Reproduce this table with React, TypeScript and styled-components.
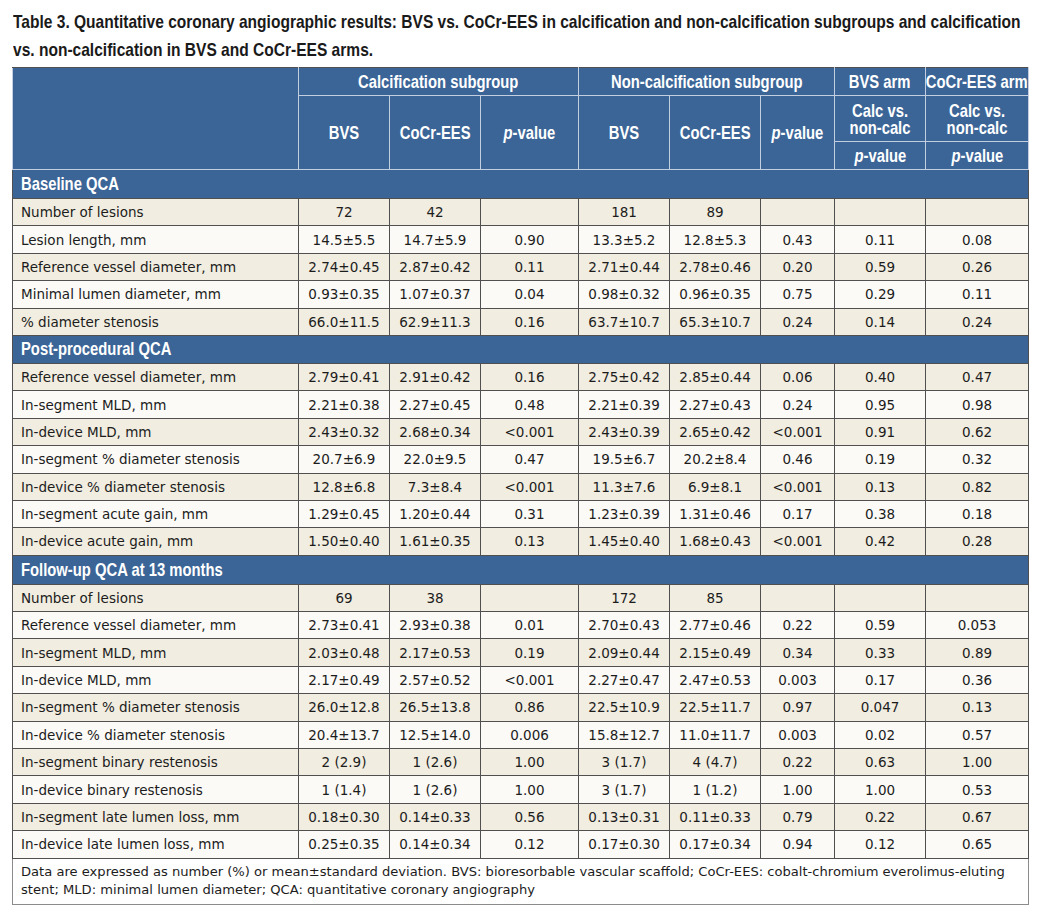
import React from 'react';
import styled, { createGlobalStyle } from 'styled-components';

const GlobalStyle = createGlobalStyle`
  html, body {
    margin: 0;
    padding: 0;
    background: #ffffff;
  }
`;

const heading = `"Liberation Sans", Arial, sans-serif`;
const body = `"DejaVu Sans", Verdana, sans-serif`;

const Page = styled.div`
  width: 1016px;
  padding: 8px 0 0 12px;
`;

const Title = styled.h1`
  margin: 0 0 3px 1px;
  font-family: ${heading};
  font-weight: 700;
  font-size: 18.5px;
  line-height: 28px;
  color: #1a1a1a;
`;

// the source uses a condensed grotesque; narrow the installed sans to match it
const Narrow = styled.span<{ $origin?: 'left' | 'center'; $scale?: number }>`
  display: inline-block;
  white-space: nowrap;
  transform: scaleX(${({ $scale }) => $scale ?? 0.8});
  transform-origin: ${({ $origin }) => $origin ?? 'center'} center;
`;

const TitleLine = styled(Narrow)`
  display: block;
`;

const Center = styled.div`
  display: flex;
  justify-content: center;
  align-items: center;
`;

const Table = styled.table`
  width: 1016px;
  table-layout: fixed;
  border-collapse: collapse;
  border: 1px solid #505050;
`;

const HeadCell = styled.th`
  background: #3b6597;
  color: #ffffff;
  font-family: ${heading};
  font-weight: 700;
  font-size: 18.5px;
  line-height: 17px;
  text-align: center;
  padding: 0;
  border: 1px solid #c3cfe0;
  border-top-color: #505050;
  white-space: nowrap;
`;

const SectionCell = styled.td`
  background: #3b6597;
  color: #ffffff;
  font-family: ${heading};
  font-weight: 700;
  font-size: 18.5px;
  padding: 0 8px;
  border: 1px solid #505050;
  border-top-color: #c3cfe0;
`;

const Row = styled.tr<{ $shade: boolean }>`
  height: 27.4px;
  background: ${({ $shade }) => ($shade ? '#f1ede0' : '#fbfaf6')};
`;

const SizedRow = styled.tr<{ $h: number }>`
  height: ${({ $h }) => $h}px;
`;

const Label = styled.td`
  font-family: ${body};
  font-size: 13.5px;
  color: #1c1c1c;
  padding: 0 8px;
  border: 1px solid #505050;
  white-space: nowrap;
`;

const Value = styled.td`
  font-family: ${body};
  font-size: 13.5px;
  color: #1c1c1c;
  text-align: center;
  padding: 0;
  border: 1px solid #505050;
  white-space: nowrap;
`;

const Note = styled.td`
  font-family: ${body};
  font-size: 13.1px;
  line-height: 18px;
  color: #1c1c1c;
  background: #ffffff;
  padding: 4px 8px 5px;
  border: 1px solid #8c8c8c;
  white-space: nowrap;
`;

const P = styled.i`
  font-style: italic;
`;

const Head: React.FC<{ children: React.ReactNode }> = ({ children }) => (
  <Center>
    <Narrow>{children}</Narrow>
  </Center>
);

const PValue = () => (
  <Head>
    <P>p</P>-value
  </Head>
);

type Line = [string, ...string[]];

const sections: { title: string; h: number; rows: Line[] }[] = [
  {
    title: 'Baseline QCA',
    h: 29,
    rows: [
      ['Number of lesions', '72', '42', '', '181', '89', '', '', ''],
      ['Lesion length, mm', '14.5±5.5', '14.7±5.9', '0.90', '13.3±5.2', '12.8±5.3', '0.43', '0.11', '0.08'],
      ['Reference vessel diameter, mm', '2.74±0.45', '2.87±0.42', '0.11', '2.71±0.44', '2.78±0.46', '0.20', '0.59', '0.26'],
      ['Minimal lumen diameter, mm', '0.93±0.35', '1.07±0.37', '0.04', '0.98±0.32', '0.96±0.35', '0.75', '0.29', '0.11'],
      ['% diameter stenosis', '66.0±11.5', '62.9±11.3', '0.16', '63.7±10.7', '65.3±10.7', '0.24', '0.14', '0.24'],
    ],
  },
  {
    title: 'Post-procedural QCA',
    h: 28,
    rows: [
      ['Reference vessel diameter, mm', '2.79±0.41', '2.91±0.42', '0.16', '2.75±0.42', '2.85±0.44', '0.06', '0.40', '0.47'],
      ['In-segment MLD, mm', '2.21±0.38', '2.27±0.45', '0.48', '2.21±0.39', '2.27±0.43', '0.24', '0.95', '0.98'],
      ['In-device MLD, mm', '2.43±0.32', '2.68±0.34', '<0.001', '2.43±0.39', '2.65±0.42', '<0.001', '0.91', '0.62'],
      ['In-segment % diameter stenosis', '20.7±6.9', '22.0±9.5', '0.47', '19.5±6.7', '20.2±8.4', '0.46', '0.19', '0.32'],
      ['In-device % diameter stenosis', '12.8±6.8', '7.3±8.4', '<0.001', '11.3±7.6', '6.9±8.1', '<0.001', '0.13', '0.82'],
      ['In-segment acute gain, mm', '1.29±0.45', '1.20±0.44', '0.31', '1.23±0.39', '1.31±0.46', '0.17', '0.38', '0.18'],
      ['In-device acute gain, mm', '1.50±0.40', '1.61±0.35', '0.13', '1.45±0.40', '1.68±0.43', '<0.001', '0.42', '0.28'],
    ],
  },
  {
    title: 'Follow-up QCA at 13 months',
    h: 29,
    rows: [
      ['Number of lesions', '69', '38', '', '172', '85', '', '', ''],
      ['Reference vessel diameter, mm', '2.73±0.41', '2.93±0.38', '0.01', '2.70±0.43', '2.77±0.46', '0.22', '0.59', '0.053'],
      ['In-segment MLD, mm', '2.03±0.48', '2.17±0.53', '0.19', '2.09±0.44', '2.15±0.49', '0.34', '0.33', '0.89'],
      ['In-device MLD, mm', '2.17±0.49', '2.57±0.52', '<0.001', '2.27±0.47', '2.47±0.53', '0.003', '0.17', '0.36'],
      ['In-segment % diameter stenosis', '26.0±12.8', '26.5±13.8', '0.86', '22.5±10.9', '22.5±11.7', '0.97', '0.047', '0.13'],
      ['In-device % diameter stenosis', '20.4±13.7', '12.5±14.0', '0.006', '15.8±12.7', '11.0±11.7', '0.003', '0.02', '0.57'],
      ['In-segment binary restenosis', '2 (2.9)', '1 (2.6)', '1.00', '3 (1.7)', '4 (4.7)', '0.22', '0.63', '1.00'],
      ['In-device binary restenosis', '1 (1.4)', '1 (2.6)', '1.00', '3 (1.7)', '1 (1.2)', '1.00', '1.00', '0.53'],
      ['In-segment late lumen loss, mm', '0.18±0.30', '0.14±0.33', '0.56', '0.13±0.31', '0.11±0.33', '0.79', '0.22', '0.67'],
      ['In-device late lumen loss, mm', '0.25±0.35', '0.14±0.34', '0.12', '0.17±0.30', '0.17±0.34', '0.94', '0.12', '0.65'],
    ],
  },
];

const widths = [286, 91, 91, 98, 91, 91, 74, 91, 103];

const App: React.FC = () => (
  <Page>
    <GlobalStyle />
    <Title>
      <TitleLine $origin="left" $scale={0.84}>
        Table 3. Quantitative coronary angiographic results: BVS vs. CoCr-EES in calcification and non-calcification subgroups and calcification
      </TitleLine>
      <TitleLine $origin="left" $scale={0.84}>
        vs. non-calcification in BVS and CoCr-EES arms.
      </TitleLine>
    </Title>
    <Table>
      <colgroup>
        {widths.map((w, i) => (
          <col key={i} style={{ width: w }} />
        ))}
      </colgroup>
      <thead>
        <SizedRow $h={28}>
          <HeadCell rowSpan={3} />
          <HeadCell colSpan={3}><Head>Calcification subgroup</Head></HeadCell>
          <HeadCell colSpan={3}><Head>Non-calcification subgroup</Head></HeadCell>
          <HeadCell><Head>BVS arm</Head></HeadCell>
          <HeadCell><Head>CoCr-EES arm</Head></HeadCell>
        </SizedRow>
        <SizedRow $h={46}>
          <HeadCell rowSpan={2}><Head>BVS</Head></HeadCell>
          <HeadCell rowSpan={2}><Head>CoCr-EES</Head></HeadCell>
          <HeadCell rowSpan={2}><PValue /></HeadCell>
          <HeadCell rowSpan={2}><Head>BVS</Head></HeadCell>
          <HeadCell rowSpan={2}><Head>CoCr-EES</Head></HeadCell>
          <HeadCell rowSpan={2}><PValue /></HeadCell>
          <HeadCell><Head>Calc vs.<br />non-calc</Head></HeadCell>
          <HeadCell><Head>Calc vs.<br />non-calc</Head></HeadCell>
        </SizedRow>
        <SizedRow $h={28}>
          <HeadCell><PValue /></HeadCell>
          <HeadCell><PValue /></HeadCell>
        </SizedRow>
      </thead>
      {sections.map((s) => (
        <tbody key={s.title}>
          <SizedRow $h={s.h}>
            <SectionCell colSpan={9}>
              <Narrow $origin="left">{s.title}</Narrow>
            </SectionCell>
          </SizedRow>
          {s.rows.map(([label, ...vals], i) => (
            <Row key={label + i} $shade={i % 2 === 0}>
              <Label>{label}</Label>
              {vals.map((v, j) => (
                <Value key={j}>{v}</Value>
              ))}
            </Row>
          ))}
        </tbody>
      ))}
      <tfoot>
        <tr>
          <Note colSpan={9}>
            Data are expressed as number (%) or mean±standard deviation. BVS: bioresorbable vascular scaffold; CoCr-EES: cobalt-chromium everolimus-eluting
            <br />
            stent; MLD: minimal lumen diameter; QCA: quantitative coronary angiography
          </Note>
        </tr>
      </tfoot>
    </Table>
  </Page>
);

export default App;
